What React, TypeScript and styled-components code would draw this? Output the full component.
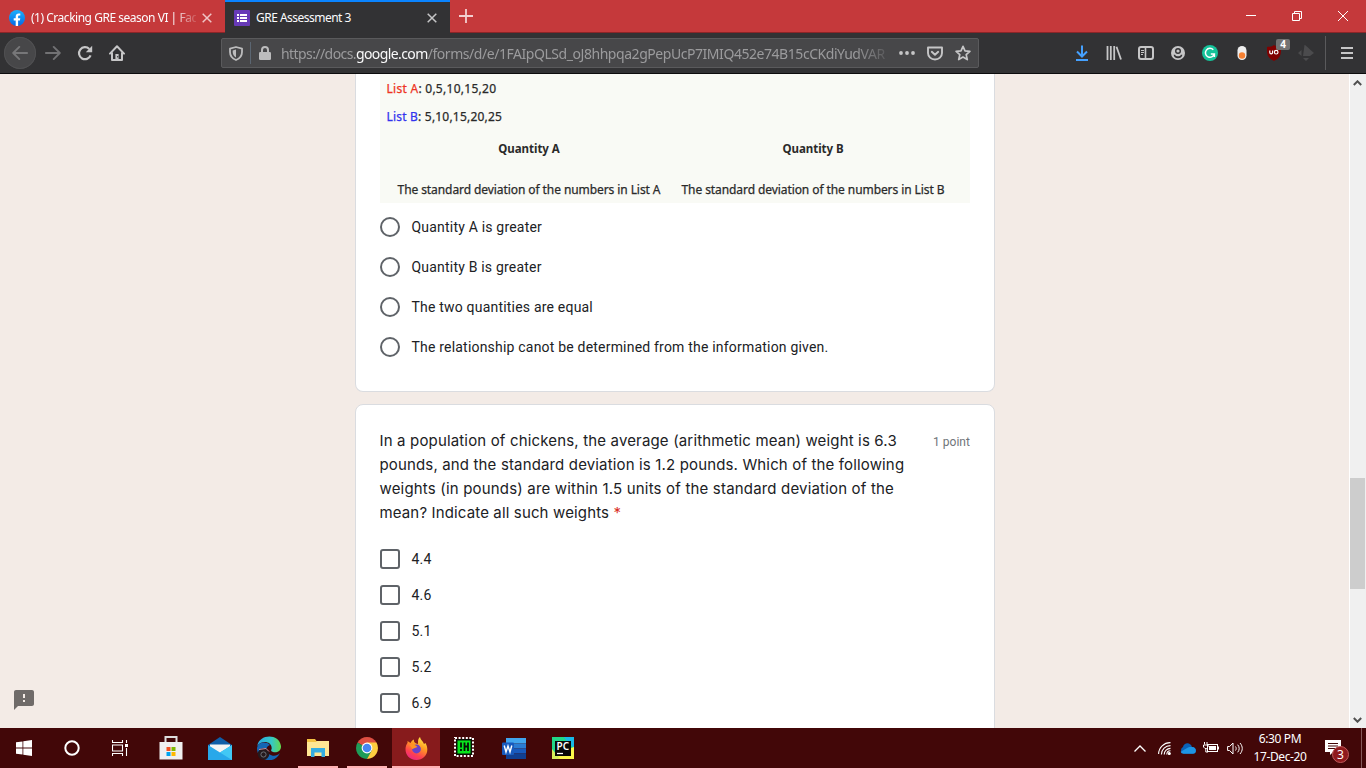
import React from 'react';
import styled, { createGlobalStyle } from 'styled-components';

const GlobalStyle = createGlobalStyle`
  * { box-sizing: border-box; }
  html, body { margin: 0; padding: 0; overflow: hidden; }
  svg { display: block; flex: none; }
`;

const uiFont = `'Noto Sans', 'Open Sans', sans-serif`;

const Screen = styled.div`
  width: 1366px;
  height: 768px;
  display: flex;
  flex-direction: column;
  overflow: hidden;
  background: #f3ebe6;
  font-family: ${uiFont};
`;

/* ---------- tab strip ---------- */

const TabStrip = styled.div`
  flex: none;
  height: 33px;
  display: flex;
  background: #c5393b;
  box-shadow: inset 0 -1px 0 #8b2528;
`;

const Tab = styled.div<{ $active?: boolean }>`
  width: 225px;
  height: 33px;
  display: flex;
  align-items: center;
  padding: ${p => (p.$active ? 0 : 2)}px 10px 0 9px;
  color: #fbfbfd;
  background: ${p => (p.$active ? '#323234' : 'transparent')};
  border-top: ${p => (p.$active ? '2px solid #0a84ff' : '0')};
`;

const TabTitle = styled.div<{ $fade?: boolean; $spacing: number }>`
  flex: 1;
  min-width: 0;
  margin-left: 6px;
  font-size: 12px;
  line-height: 18px;
  letter-spacing: ${p => p.$spacing}px;
  white-space: nowrap;
  ${p => p.$fade && 'mask-image: linear-gradient(to right, #000 86%, rgba(0,0,0,0.15) 100%);'}
`;

const TabClose = styled.div`
  width: 16px;
  display: flex;
  justify-content: center;
  margin-left: 3px;
`;

const NewTab = styled.div`
  width: 32px;
  display: flex;
  align-items: center;
  justify-content: center;
  height: 32px;
`;

const WindowButtons = styled.div`
  margin-left: auto;
  height: 32px;
  display: flex;
`;

const WindowButton = styled.div`
  width: 46px;
  display: flex;
  align-items: center;
  justify-content: center;
`;

/* ---------- toolbar ---------- */

const Toolbar = styled.div`
  flex: none;
  height: 41px;
  display: flex;
  align-items: center;
  background: #323234;
  border-bottom: 1px solid #0c0c0d;
  padding-left: 4px;
`;

const NavButton = styled.div<{ $round?: boolean }>`
  width: 32px;
  height: 32px;
  display: flex;
  align-items: center;
  justify-content: center;
  border-radius: 50%;
  background: ${p => (p.$round ? '#474749' : 'transparent')};
  box-shadow: ${p => (p.$round ? 'inset 0 0 0 1px #505052' : 'none')};
  margin-right: ${p => (p.$round ? 1 : 0)}px;
`;

const UrlBar = styled.div`
  width: 758px;
  height: 30px;
  margin-left: 88px;
  display: flex;
  align-items: center;
  background: #474749;
  border: 1px solid #5a5a5c;
  border-radius: 2px;
`;

const UrlIcon = styled.div<{ $w: number }>`
  width: ${p => p.$w}px;
  display: flex;
  justify-content: center;
`;

const UrlDivider = styled.div`
  width: 1px;
  height: 22px;
  background: #5b6672;
`;

const UrlText = styled.div`
  width: 610px;
  padding-top: 2px;
  margin-left: 2px;
  font-size: 14px;
  line-height: 22px;
  letter-spacing: -0.45px;
  color: #9b9b9d;
  white-space: nowrap;
  mask-image: linear-gradient(to right, #000 94%, rgba(0, 0, 0, 0.1) 100%);
  i { font-style: normal; letter-spacing: -0.58px; }
  b { font-weight: 400; color: #f9f9fa; letter-spacing: -0.6px; }
`;

const ToolbarActions = styled.div`
  margin-left: auto;
  display: flex;
  align-items: center;
`;

const ToolbarDivider = styled.div`
  width: 1px;
  height: 34px;
  margin-left: 3px;
  background: #5a5a5c;
`;

const MenuButton = styled.div`
  width: 40px;
  padding-left: 2px;
  display: flex;
  justify-content: center;
`;

const ExtensionSlot = styled(NavButton)`
  position: relative;
`;

const ExtensionBadge = styled.span`
  position: absolute;
  left: 18px;
  top: 2px;
  width: 14px;
  height: 11px;
  border-radius: 2px;
  background: #737373;
  color: #fff;
  font: 700 10px/11px ${uiFont};
  text-align: center;
`;

/* ---------- page ---------- */

const Viewport = styled.div`
  flex: none;
  height: 654px;
  display: flex;
  position: relative;
  overflow: hidden;
`;

const FormColumn = styled.main`
  width: 640px;
  margin-left: 355px;
  display: flex;
  flex-direction: column;
  gap: 12px;
`;

const Card = styled.section<{ $continued?: boolean }>`
  flex: none;
  height: ${p => (p.$continued ? 318 : 360)}px;
  padding: ${p => (p.$continued ? '0 24px' : '24px 24px 0')};
  background: #fff;
  border: 1px solid #dadce0;
  border-radius: ${p => (p.$continued ? '0 0 8px 8px' : '8px')};
  ${p => p.$continued && 'border-top: 0;'}
`;

const Figure = styled.div`
  height: 129px;
  background: #f9faf5;
  font-family: ${uiFont};
  font-size: 12px;
  line-height: 16px;
  color: #2a2a2a;
  -webkit-text-stroke: 0.25px currentColor;
`;

const ListLine = styled.div<{ $spacing: number }>`
  padding: 7px 0 5px 6.5px;
  height: 28px;
  letter-spacing: ${p => p.$spacing}px;
  white-space: nowrap;
`;

const ListName = styled.span<{ $color: string }>`
  color: ${p => p.$color};
`;

const QuantityColumns = styled.div`
  display: grid;
  grid-template-columns: 264px 264px;
  column-gap: 20px;
  padding: 11px 0 0 17px;
  text-align: center;
`;

const QuantityHead = styled.div`
  font-weight: 700;
  font-size: 11.5px;
  letter-spacing: -0.05px;
  margin-bottom: 25px;
  -webkit-text-stroke: 0;
`;

const QuantityBody = styled.div`
  letter-spacing: -0.08px;
  white-space: nowrap;
`;

const OptionRow = styled.div<{ $h: number }>`
  height: ${p => p.$h}px;
  display: flex;
  align-items: center;
  gap: 11.5px;
  font: 400 14px/20px Roboto, sans-serif;
  letter-spacing: 0.2px;
  color: #202124;
`;

const RadioList = styled.div`
  padding-top: 4px;
`;

const Radio = styled.span`
  width: 20px;
  height: 20px;
  border: 2px solid #5f6368;
  border-radius: 50%;
`;

const Checkbox = styled(Radio)`
  border-radius: 3px;
`;

const QuestionHead = styled.div`
  display: flex;
  justify-content: space-between;
`;

const QuestionText = styled.div`
  margin-left: -0.5px;
  font: 400 15px/24px Inter, sans-serif;
  color: #202124;
`;

const QuestionLine = styled.div<{ $spacing: number }>`
  letter-spacing: ${p => p.$spacing}px;
  white-space: nowrap;
`;

const Required = styled.span`
  color: #d93025;
`;

const Points = styled.div`
  font: 400 12px/24px Roboto, sans-serif;
  letter-spacing: 0.05px;
  color: #70757a;
  padding-top: 1px;
`;

const CheckboxList = styled.div`
  padding-top: 16px;
`;

const ReportButton = styled.div`
  position: absolute;
  left: 12px;
  top: 614px;
`;

const ScrollBar = styled.div`
  margin-left: auto;
  width: 17px;
  height: 654px;
  padding-right: 1px;
  background: #f0f0f0;
  border-left: 1px solid #fff;
  display: flex;
  flex-direction: column;
  align-items: center;
`;

const ScrollThumb = styled.div`
  width: 15px;
  height: 111px;
  margin-top: 387px;
  background: #cdcdcd;
`;

const ScrollArrow = styled.div`
  height: 17px;
  display: flex;
  align-items: center;
`;

const ScrollGap = styled.div`
  flex: 1;
`;

/* ---------- taskbar ---------- */

const Taskbar = styled.footer`
  flex: none;
  height: 40px;
  display: flex;
  background: #420708;
`;

const TaskGroup = styled.div<{ $gap: number; $ml?: number }>`
  display: flex;
  gap: ${p => p.$gap}px;
  margin-left: ${p => p.$ml ?? 0}px;
`;

const TaskItem = styled.div<{ $state?: 'open' | 'active' }>`
  width: 48px;
  height: 40px;
  display: flex;
  align-items: center;
  justify-content: center;
  background: ${p => (p.$state === 'active' ? '#871b1c' : 'transparent')};
  background-image: ${p => (p.$state ? 'linear-gradient(#ffb1b3, #ffb1b3)' : 'none')};
  background-size: ${p => (p.$state === 'active' ? '48px' : '40px')} 2px;
  background-position: center bottom;
  background-repeat: no-repeat;
`;

const Tray = styled.div`
  margin-left: auto;
  display: flex;
  align-items: center;
  color: #fff;
`;

const TrayIcon = styled.div<{ $w: number }>`
  width: ${p => p.$w}px;
  display: flex;
  justify-content: center;
`;

const Clock = styled.div`
  width: 66px;
  text-align: center;
  font-size: 12px;
  line-height: 18px;
  padding-bottom: 1px;
  letter-spacing: -0.38px;
  white-space: nowrap;
`;

const Notifications = styled.div`
  position: relative;
  width: 48px;
  height: 40px;
  padding: 12px 0 0 12px;
`;

const NoticeCount = styled.span`
  position: absolute;
  left: 19px;
  top: 18px;
  width: 17px;
  height: 17px;
  border-radius: 50%;
  border: 1px solid #c05a5c;
  background: #8f1a1d;
  font-size: 12px;
  line-height: 15px;
  text-align: center;
`;

const ShowDesktop = styled.div`
  width: 5px;
  height: 40px;
  border-left: 1px solid #85595a;
`;

/* ---------- drawings ---------- */

const Cross = ({ color }: { color: string }) => (
  <svg width="10" height="10" viewBox="0 0 10 10">
    <path d="M.7.7l8.6 8.6M9.3.7L.7 9.3" stroke={color} strokeWidth="1.5" />
  </svg>
);

const FacebookIcon = () => (
  <svg width="16" height="16" viewBox="0 0 16 16">
    <defs><linearGradient id="fb" x2="0" y2="1"><stop stopColor="#1cb0fd" /><stop offset="1" stopColor="#0668e4" /></linearGradient></defs>
    <circle cx="8" cy="8" r="8" fill="url(#fb)" />
    <path d="M6.7 16v-5.4H4.7V8.2h2V6.5c0-2 1.2-3.1 3-3.1.8 0 1.6.1 1.6.1v2h-1c-.9 0-1.2.6-1.2 1.1v1.6h2.2l-.4 2.4H9.1V16z" fill="#fff" />
  </svg>
);

const FormsIcon = () => (
  <svg width="16" height="16" viewBox="0 0 16 16">
    <rect width="16" height="16" rx="1" fill="#673ab7" />
    <path d="M3 4h2v2H3zM6 4h7v2H6zM3 7h2v2H3zM6 7h7v2H6zM3 10h2v2H3zM6 10h7v2H6z" fill="#fff" />
  </svg>
);

const Arrow = ({ flip }: { flip?: boolean }) => (
  <svg width="16" height="16" viewBox="0 0 16 16" transform={flip ? 'scale(-1 1)' : undefined}>
    <path d="M15.2 8H1.4M7.3 1.9L1.2 8l6.1 6.1" fill="none" stroke={flip ? '#727274' : '#777779'} strokeWidth="1.9" strokeLinecap="round" strokeLinejoin="round" />
  </svg>
);

const ReloadIcon = () => (
  <svg width="16" height="16" viewBox="0 0 16 16">
    <path d="M13.6 10.4A6 6 0 1 1 12.3 4" fill="none" stroke="#c6c6c7" strokeWidth="2.2" />
    <path d="M15.2.8v6.4H8.8z" fill="#c6c6c7" />
  </svg>
);

const HomeIcon = () => (
  <svg width="16" height="16" viewBox="0 0 16 16">
    <path d="M1 8.6L8 1.3l7 7.3M3 7.4V15h10V7.4" fill="none" stroke="#c6c6c7" strokeWidth="2" strokeLinecap="round" strokeLinejoin="round" />
    <path d="M6.4 9h3.2v6H6.4z" fill="#c6c6c7" /><circle cx="8.7" cy="11.8" r=".7" fill="#323234" />
  </svg>
);

const ShieldIcon = () => (
  <svg width="14" height="15" viewBox="0 0 14 15">
    <path d="M7 1L13 2.6V6c0 4-2.5 6.7-6 8C3.5 12.7 1 10 1 6V2.6z" fill="none" stroke="#bcbcbd" strokeWidth="1.8" strokeLinejoin="round" />
    <path d="M7 3.6v7.8C5 10.2 3.7 8.4 3.7 6V4.5z" fill="#bcbcbd" />
  </svg>
);

const LockIcon = () => (
  <svg width="12" height="14" viewBox="0 0 12 14">
    <path d="M3 7V4a3 3 0 0 1 6 0v3" fill="none" stroke="#bcbcbd" strokeWidth="2" />
    <rect y="6" width="12" height="8" rx="1.3" fill="#bcbcbd" />
  </svg>
);

const DotsIcon = () => (
  <svg width="16" height="4" viewBox="0 0 16 4" fill="#c6c6c7"><circle cx="2" cy="2" r="1.9" /><circle cx="8" cy="2" r="1.9" /><circle cx="14" cy="2" r="1.9" /></svg>
);

const PocketIcon = () => (
  <svg width="16" height="15" viewBox="0 0 16 15" fill="none" stroke="#c6c6c7" strokeWidth="1.9" strokeLinecap="round" strokeLinejoin="round">
    <path d="M1 1.5h14V7a7 6.5 0 0 1-14 0z" /><path d="M4.8 5.8L8 8.8l3.2-3" />
  </svg>
);

const StarIcon = () => (
  <svg width="16" height="16" viewBox="0 0 16 16">
    <path d="M8 1.300l2 4.500 4.900.5-3.700 3.300 1.100 5L8 12.100l-4.300 2.500 1.100-5L1.100 6.300 6 5.800z" fill="none" stroke="#c6c6c7" strokeWidth="1.7" strokeLinejoin="round" />
  </svg>
);

const DownloadIcon = () => (
  <svg width="14" height="16" viewBox="0 0 14 16" fill="none" stroke="#45a1ff" strokeWidth="2">
    <path d="M7 .5v10M2 6.500l5 5 5-5M1 15h12" />
  </svg>
);

const LibraryIcon = () => (
  <svg width="16" height="14" viewBox="0 0 16 14" stroke="#c6c6c7" strokeWidth="1.8">
    <path d="M1.500 0v14M4.800 0v14M8.200 0v14M10.500 .8L15 13.500" />
  </svg>
);

const SidebarIcon = () => (
  <svg width="16" height="14" viewBox="0 0 16 14" fill="none" stroke="#c6c6c7">
    <rect x="1" y="1" width="14" height="12" rx="2" strokeWidth="2" />
    <path d="M7.500 1v12" strokeWidth="1.6" /><path d="M3 4.500h3M3 6.500h3M3 8.500h2" />
  </svg>
);

const AccountIcon = () => (
  <svg width="14" height="14" viewBox="0 0 14 14">
    <circle cx="7" cy="7" r="7" fill="#c6c6c7" />
    <circle cx="7" cy="5" r="2.3" fill="none" stroke="#323234" strokeWidth="1.4" />
    <path d="M2.600 8.700h1.500c.5 2 5.300 2 5.800 0h1.500c-.5 4.700-8.300 4.700-8.800 0z" fill="#323234" />
  </svg>
);

const GrammarlyIcon = () => (
  <svg width="16" height="16" viewBox="0 0 16 16">
    <circle cx="8" cy="8" r="8" fill="#15c39a" />
    <path d="M11.300 4.800A4.500 4.500 0 1 0 12.300 9H8.800M12.400 9v3" fill="none" stroke="#fff" strokeWidth="1.5" />
  </svg>
);

const PillIcon = () => (
  <svg width="10" height="16" viewBox="0 0 10 16">
    <rect x=".5" y="1" width="9" height="14" rx="4.5" fill="#eeeeee" /><circle cx="5" cy="10.5" r="3.2" fill="#f58032" />
  </svg>
);

const UblockIcon = () => (
  <svg width="14" height="16" viewBox="0 0 14 16">
    <path d="M7 0c2.500 1.700 4.500 2 7 2 0 7 .3 10.500-7 14C-.3 12.500 0 9 0 2c2.500 0 4.500-.3 7-2z" fill="#800000" />
    <path d="M2.800 5.500v2a1.400 1.400 0 0 0 2.800 0v-2" fill="none" stroke="#fff" strokeWidth="1.2" /><circle cx="9.2" cy="7.2" r="1.8" fill="none" stroke="#fff" strokeWidth="1.2" />
  </svg>
);

const FadedDiamond = () => (
  <svg width="16" height="16" viewBox="0 0 16 16" fill="#4b4b4d">
    <path d="M6.500 0c1 0 2 1.500 9.500 8l-4 3H5zM3.500 5v6L0 8zM5 13h6l-3 3z" />
  </svg>
);

const WindowsIcon = () => (
  <svg width="16" height="16" viewBox="0 0 16 16" fill="#fff">
    <path d="M0 2.300L6.500 1.400v6.200H0zM7.300 1.300L16 0v7.600H7.300zM0 8.400h6.500v6.200L0 13.700zM7.300 8.400H16V16l-8.700-1.300z" />
  </svg>
);

const TaskViewIcon = () => (
  <svg width="16" height="16" viewBox="0 0 16 16" fill="none" stroke="#fff">
    <path d="M.5 0v2.500h10V0M.5 16v-2.500h10V16M.5 5h10v6H.5zM14.500 0v3M14.500 8v8" strokeWidth="1.1" /><path d="M13 4h3v3h-3z" fill="#fff" stroke="none" />
  </svg>
);

const StoreIcon = () => (
  <svg width="24" height="24" viewBox="0 0 24 24">
    <path d="M6.500 7V1h11v6" fill="none" stroke="#dedede" strokeWidth="2" />
    <path d="M0.500 6h23v17.500h-23z" fill="#f0f0f0" />
    <path d="M7.500 11h4v4h-4z" fill="#f25022" /><path d="M12.500 11h4v4h-4z" fill="#7fba00" /><path d="M7.500 16h4v4h-4z" fill="#00a4ef" /><path d="M12.500 16h4v4h-4z" fill="#ffb900" />
  </svg>
);

const MailIcon = () => (
  <svg width="24" height="23" viewBox="0 0 24 23">
    <path d="M0 8L12 0l12 8v3H0z" fill="#0f5ea8" /><path d="M2 7.500h20V12l-10 5L2 12z" fill="#f4f4f4" />
    <path d="M0 8l12 7.500L24 8v15H0z" fill="#28a8ea" /><path d="M24 8v15L12 15.500z" fill="#41c8f5" />
  </svg>
);

const EdgeIcon = () => (
  <svg width="24" height="24" viewBox="0 0 24 24">
    <defs><linearGradient id="edge"><stop stopColor="#2aa8e0" /><stop offset=".6" stopColor="#35c8c8" /><stop offset="1" stopColor="#63d94c" /></linearGradient></defs>
    <path d="M.3 10C2-2 22-3 24 10c.3 5-4 7-8 6-3-.7-1.500-2-1.300-3.500C15 5 4 4 .3 10z" fill="url(#edge)" />
    <path d="M0 12C1 6 9 5 13 9c-4 1-5 6-1 9s8 2 11-1c-3 6-8 8-13 7C3 22 0 18 0 12z" fill="#1466b4" />
    <circle cx="6.5" cy="18" r="5.8" fill="#25191d" /><circle cx="6.5" cy="18.5" r="2.6" fill="none" stroke="#6d6f76" /><path d="M2 13.500l7-1 3 3" stroke="#d08d96" fill="none" />
  </svg>
);

const FolderIcon = () => (
  <svg width="22" height="18" viewBox="0 0 22 18">
    <path d="M0 0h8l1.500 2H22v15H0z" fill="#f5c243" /><path d="M0 3h9l1-1h12v15H0z" fill="#ffe694" />
    <path d="M4 9h14v9h-3.500v-4.500h-7V18H4z" fill="#35ade2" />
  </svg>
);

const ChromeIcon = () => (
  <svg width="22" height="22" viewBox="0 0 22 22">
    <path d="M11 11L1.500 5.500a11 11 0 0 1 19 0z" fill="#dd4f43" /><path d="M1.500 5.500A11 11 0 0 0 11 22l5-8-5-3z" fill="#1e9c58" /><path d="M20.500 5.500A11 11 0 0 1 11 22l5-9-5-7.500z" fill="#fecd40" />
    <circle cx="11" cy="11" r="5.4" fill="#fff" /><circle cx="11" cy="11" r="4.3" fill="#4587f3" />
  </svg>
);

const FirefoxIcon = () => (
  <svg width="23" height="23" viewBox="0 0 23 23">
    <defs><linearGradient id="fox" x1=".8" y1="0" x2=".3" y2="1"><stop stopColor="#fff04a" /><stop offset=".4" stopColor="#ff9b22" /><stop offset=".75" stopColor="#ff4050" /><stop offset="1" stopColor="#ec2785" /></linearGradient></defs>
    <path d="M13 5c0-3 1-4 2-5 .5 3 3 4 4 7l1.500-1c5 9-1 17-9 17C3 23-1 15 1 9c.4-1.500 1-2.500 1.500-3V4l3 2c1-2 2-3 3.500-3.500C8.500 5 10 6 13 7z" fill="url(#fox)" />
    <circle cx="11.5" cy="12" r="4.4" fill="#6a42c8" /><path d="M4.500 8c4-1 6 0 8 2l-4 1.500C7 13 7 11 4.500 8z" fill="#ff9522" />
  </svg>
);

const ChipIcon = () => (
  <svg width="22" height="22" viewBox="0 0 22 22">
    <rect x="1" y="1" width="18" height="18" fill="none" stroke="#fff" strokeWidth="2" strokeDasharray="2 1.6" />
    <rect x="2" y="2" width="16" height="16" fill="#061006" /><rect x="3.5" y="3.5" width="13" height="13" fill="#08e51c" />
    <path d="M7 5.500v5M7 12v2M10.500 5.500V14M14 5.500V14M10.500 9.500H14" stroke="#061006" strokeWidth="1.8" />
  </svg>
);

const WordIcon = () => (
  <svg width="24" height="21" viewBox="0 0 24 21">
    <path d="M4 0h20v5.500H4z" fill="#41a5ee" /><path d="M4 5.500h20v5H4z" fill="#2b7cd3" /><path d="M4 10.500h20v5H4z" fill="#185abd" /><path d="M4 15.500h20V21H4z" fill="#103f91" />
    <rect y="4.5" width="12" height="12.5" rx="1" fill="#185abd" /><path d="M2.200 7.500l1.800 6.500 2-6 2 6 1.800-6.500" fill="none" stroke="#fff" strokeWidth="1.4" />
  </svg>
);

const PyCharmIcon = () => (
  <svg width="22" height="22" viewBox="0 0 22 22">
    <path d="M0 0h22v22H0z" fill="#21d789" /><path d="M12 0h10v11l-6-5z" fill="#18b9e8" /><path d="M22 10v12H3l10-9z" fill="#fcf84a" /><path d="M0 22V12l8 10z" fill="#d6ee5b" />
    <rect x="3" y="4" width="16" height="15" fill="#080808" />
    <text x="4.5" y="12.5" fill="#fff" fontFamily="Noto Sans, sans-serif" fontSize="10" fontWeight="600">PC</text>
    <path d="M5 16.500h6" stroke="#fff" strokeWidth="1.3" />
  </svg>
);

const Chevron = ({ up }: { up?: boolean }) => (
  <svg width="9" height="6" viewBox="0 0 9 6"><path d={up ? 'M.8 5l3.700-3.700L8.200 5' : 'M.8 1l3.700 3.700L8.200 1'} fill="none" stroke="#505050" strokeWidth="2" /></svg>
);

const WifiIcon = () => (
  <svg width="13" height="13" viewBox="0 0 13 13" fill="none" stroke="#fff" strokeWidth="1.1">
    <path d="M.6 12A11.500 11.500 0 0 1 12.500.6" /><path d="M3.400 12.500A9 9 0 0 1 12.500 3.600" /><path d="M6.200 12.500a6.200 6.200 0 0 1 6.300-6.100" /><path d="M8.800 12.500c0-2.200 1.500-3.700 3.700-3.700" /><circle cx="11.3" cy="11.5" r="1" fill="#fff" />
  </svg>
);

const CloudIcon = () => (
  <svg width="16" height="11" viewBox="0 0 16 11">
    <path d="M3.500 10.500A3.500 3.500 0 0 1 3 4C4-.7 10.500-1 12 4c5 0 5 6.500 1 6.500z" fill="#0a62b8" /><path d="M3.500 10.700c-1.500 0-2.500-1-2.800-2L8 4.500c2-.8 3-.5 4-.5 5 0 5 6.700 1 6.700z" fill="#1e95e4" />
  </svg>
);

const BatteryIcon = () => (
  <svg width="16" height="12" viewBox="0 0 16 12">
    <rect x="4.5" y="2.5" width="10" height="7" fill="#420708" stroke="#fff" /><path d="M6 4h7v4H6zM15 4.500h1v3h-1z" fill="#fff" />
    <path d="M1.500 0v2.500M4 0v2.500M.5 3h4.500v2L3.500 6.500h-1.500L.5 5zM2.800 6v4H5" fill="none" stroke="#fff" />
  </svg>
);

const SpeakerIcon = () => (
  <svg width="17" height="13" viewBox="0 0 17 13" fill="none" stroke="#fff">
    <path d="M.6 4.500h2L6 1v11L2.600 8.500h-2z" /><path d="M8.500 4.500c.9 1.300.9 2.700 0 4M10.700 2.700c2 2.500 2 5.100 0 7.600M13 1c3 3.500 3 7.500 0 11" />
  </svg>
);

const radioOptions = [
  'Quantity A is greater',
  'Quantity B is greater',
  'The two quantities are equal',
  'The relationship canot be determined from the information given.',
];
const weights = ['4.4', '4.6', '5.1', '5.2', '6.9'];

export default function App() {
  return (
    <Screen>
      <GlobalStyle />
      <TabStrip>
        <Tab>
          <FacebookIcon />
          <TabTitle $fade $spacing={-0.48}>(1) Cracking GRE season VI | Fac</TabTitle>
          <TabClose><Cross color="#efc4c5" /></TabClose>
        </Tab>
        <Tab $active>
          <FormsIcon />
          <TabTitle $spacing={-0.52}>GRE Assessment 3</TabTitle>
          <TabClose><Cross color="#c6c6c7" /></TabClose>
        </Tab>
        <NewTab>
          <svg width="14" height="14" viewBox="0 0 14 14"><path d="M7 0v14M0 7h14" stroke="#f3cfd0" strokeWidth="1.8" /></svg>
        </NewTab>
        <WindowButtons>
          <WindowButton><svg width="10" height="10"><path d="M0 4.500h10" stroke="#fff" /></svg></WindowButton>
          <WindowButton><svg width="10" height="10" fill="none" stroke="#fff"><path d="M.5 2.500h7v7h-7zM2.500 2.500v-2h7v7h-2" /></svg></WindowButton>
          <WindowButton><svg width="10" height="10"><path d="M0 0l10 10M10 0L0 10" stroke="#fff" /></svg></WindowButton>
        </WindowButtons>
      </TabStrip>

      <Toolbar>
        <NavButton $round><Arrow /></NavButton>
        <NavButton><Arrow flip /></NavButton>
        <NavButton><ReloadIcon /></NavButton>
        <NavButton><HomeIcon /></NavButton>
        <UrlBar>
          <UrlIcon $w={28}><ShieldIcon /></UrlIcon>
          <UrlDivider />
          <UrlIcon $w={28}><LockIcon /></UrlIcon>
          <UrlText><i>https://docs.</i><b>google.com</b>/forms/d/e/1FAIpQLSd_oJ8hhpqa2gPepUcP7IMIQ452e74B15cCKdiYudVAR</UrlText>
          <UrlIcon $w={32}><DotsIcon /></UrlIcon>
          <UrlIcon $w={24}><PocketIcon /></UrlIcon>
          <UrlIcon $w={31}><StarIcon /></UrlIcon>
        </UrlBar>
        <ToolbarActions>
          <NavButton><DownloadIcon /></NavButton>
          <NavButton><LibraryIcon /></NavButton>
          <NavButton><SidebarIcon /></NavButton>
          <NavButton><AccountIcon /></NavButton>
          <NavButton><GrammarlyIcon /></NavButton>
          <NavButton><PillIcon /></NavButton>
          <ExtensionSlot><UblockIcon /><ExtensionBadge>4</ExtensionBadge></ExtensionSlot>
          <NavButton><FadedDiamond /></NavButton>
          <ToolbarDivider />
          <MenuButton>
            <svg width="12" height="12" viewBox="0 0 12 12"><path d="M0 1h12M0 6h12M0 11h12" stroke="#c6c6c7" strokeWidth="2" /></svg>
          </MenuButton>
        </ToolbarActions>
      </Toolbar>

      <Viewport>
        <FormColumn>
          <Card $continued>
            <Figure>
              <ListLine $spacing={0.27}><ListName $color="#ee3322">List A</ListName>: 0,5,10,15,20</ListLine>
              <ListLine $spacing={0.2}><ListName $color="#3333ee">List B</ListName>: 5,10,15,20,25</ListLine>
              <QuantityColumns>
                <QuantityHead>Quantity A</QuantityHead>
                <QuantityHead>Quantity B</QuantityHead>
                <QuantityBody>The standard deviation of the numbers in List A</QuantityBody>
                <QuantityBody>The standard deviation of the numbers in List B</QuantityBody>
              </QuantityColumns>
            </Figure>
            <RadioList>
              {radioOptions.map(o => <OptionRow $h={40} key={o}><Radio />{o}</OptionRow>)}
            </RadioList>
          </Card>
          <Card>
            <QuestionHead>
              <QuestionText>
                <QuestionLine $spacing={0.16}>In a population of chickens, the average (arithmetic mean) weight is 6.3</QuestionLine>
                <QuestionLine $spacing={0.15}>pounds, and the standard deviation is 1.2 pounds. Which of the following</QuestionLine>
                <QuestionLine $spacing={0.18}>weights (in pounds) are within 1.5 units of the standard deviation of the</QuestionLine>
                <QuestionLine $spacing={0.14}>mean? Indicate all such weights <Required>*</Required></QuestionLine>
              </QuestionText>
              <Points>1 point</Points>
            </QuestionHead>
            <CheckboxList>
              {weights.map(w => <OptionRow $h={36} key={w}><Checkbox />{w}</OptionRow>)}
            </CheckboxList>
          </Card>
        </FormColumn>
        <ReportButton>
          <svg width="24" height="24" viewBox="0 0 24 24"><path d="M20 2H4c-1.100 0-2 .9-2 2v18l4-4h14c1.100 0 2-.9 2-2V4c0-1.100-.9-2-2-2zm-7 12h-2v-2h2v2zm0-4h-2V6h2v4z" fill="#6f6b69" /></svg>
        </ReportButton>
        <ScrollBar>
          <ScrollArrow><Chevron up /></ScrollArrow>
          <ScrollThumb />
          <ScrollGap />
          <ScrollArrow><Chevron /></ScrollArrow>
        </ScrollBar>
      </Viewport>

      <Taskbar>
        <TaskGroup $gap={0}>
          <TaskItem><WindowsIcon /></TaskItem>
          <TaskItem><svg width="16" height="16"><circle cx="8" cy="8" r="6.7" fill="none" stroke="#fff" strokeWidth="2" /></svg></TaskItem>
          <TaskItem><TaskViewIcon /></TaskItem>
        </TaskGroup>
        <TaskGroup $gap={1} $ml={3}>
          <TaskItem><StoreIcon /></TaskItem>
          <TaskItem><MailIcon /></TaskItem>
          <TaskItem><EdgeIcon /></TaskItem>
          <TaskItem $state="open"><FolderIcon /></TaskItem>
          <TaskItem $state="open"><ChromeIcon /></TaskItem>
          <TaskItem $state="active"><FirefoxIcon /></TaskItem>
          <TaskItem><ChipIcon /></TaskItem>
          <TaskItem><WordIcon /></TaskItem>
          <TaskItem><PyCharmIcon /></TaskItem>
        </TaskGroup>
        <Tray>
          <TrayIcon $w={24}><svg width="12" height="7" viewBox="0 0 12 7"><path d="M.5 6.500L6 1l5.500 5.500" fill="none" stroke="#fff" strokeWidth="1.3" /></svg></TrayIcon>
          <TrayIcon $w={24}><WifiIcon /></TrayIcon>
          <TrayIcon $w={23}><CloudIcon /></TrayIcon>
          <TrayIcon $w={24}><BatteryIcon /></TrayIcon>
          <TrayIcon $w={24}><SpeakerIcon /></TrayIcon>
          <Clock>6:30 PM<br />17-Dec-20</Clock>
          <Notifications>
            <svg width="16" height="16" viewBox="0 0 16 16"><path d="M0 0h16v12H8l-3 3v-3H0z" fill="#fff" /><path d="M3 3.500h10M3 6h10M3 8.500h7" stroke="#420708" /></svg>
            <NoticeCount>3</NoticeCount>
          </Notifications>
          <ShowDesktop />
        </Tray>
      </Taskbar>
    </Screen>
  );
}
